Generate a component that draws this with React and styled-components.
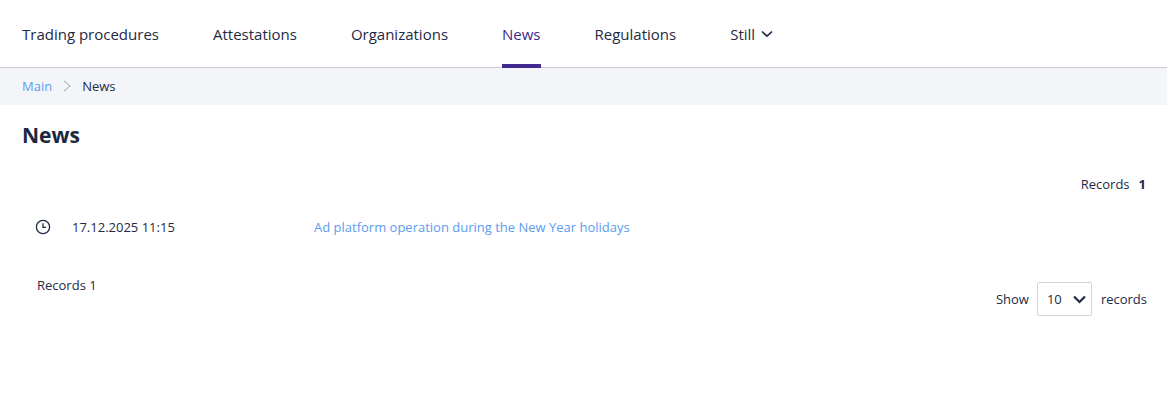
import React from 'react'
import styled, { createGlobalStyle } from 'styled-components'

const GlobalStyle = createGlobalStyle`
html, body {
    margin: 0;
    padding: 0;
    background: #fff;
    font-family: "Open Sans", "Liberation Sans", sans-serif;
    color: #1f2a44;
}
* { box-sizing: border-box; }
`

const navItems = ['Trading procedures', 'Attestations', 'Organizations', 'News', 'Regulations']

const App = () => (
    <>
        <GlobalStyle />
        <Nav>
            {navItems.map(item => (
                <NavItem key={item} $active={item === 'News'}>{item}</NavItem>
            ))}
            <NavItem>
                Still
                <svg width="12" height="8" viewBox="0 0 12 8" fill="none" stroke="#1f2a44" strokeWidth="1.7">
                    <path d="M1 1.5 L6 6.2 L11 1.5" />
                </svg>
            </NavItem>
        </Nav>
        <Breadcrumbs>
            <Crumb>Main</Crumb>
            <svg width="8" height="12" viewBox="0 0 8 12" fill="none" stroke="#9a9fae" strokeWidth="1">
                <path d="M1 1 L7 6 L1 11" />
            </svg>
            <CurrentCrumb>News</CurrentCrumb>
        </Breadcrumbs>
        <Title>News</Title>
        <TopCount>
            <span>Records</span>
            <strong>1</strong>
        </TopCount>
        <NewsRow>
            <ClockCell>
                <svg width="16" height="16" viewBox="0 0 16 16" fill="none" stroke="#1f2a44" strokeWidth="1.3">
                    <circle cx="8" cy="8" r="6.6" />
                    <path d="M8 4.2 V8.3 H11" />
                </svg>
            </ClockCell>
            <DateCell>17.12.2025 11:15</DateCell>
            <NewsLink>Ad platform operation during the New Year holidays</NewsLink>
        </NewsRow>
        <Footer>
            <BottomCount>Records 1</BottomCount>
            <PageSize>
                <span>Show</span>
                <Select>
                    <span>10</span>
                    <svg width="13" height="9" viewBox="0 0 13 9" fill="none" stroke="#1f2a44" strokeWidth="2.2">
                        <path d="M1 1.5 L6.5 7 L12 1.5" />
                    </svg>
                </Select>
                <span>records</span>
            </PageSize>
        </Footer>
    </>
)

const Nav = styled.nav`
height: 68px;
display: flex;
gap: 54px;
padding-left: 22px;
border-bottom: 1px solid #c9ccd4;
`
const NavItem = styled.div`
height: 68px;
display: flex;
align-items: center;
gap: 6px;
padding-top: 3px;
font-size: 15px;
color: ${p => (p.$active ? '#40298f' : '#1f2a44')};
border-bottom: 4px solid ${p => (p.$active ? '#422a92' : 'transparent')};
`
const Breadcrumbs = styled.div`
height: 37px;
display: flex;
align-items: center;
gap: 11px;
padding: 0 22px 1px;
background: #f4f5f9;
font-size: 13px;
`
const Crumb = styled.span`
color: #5c9cee;
`
const CurrentCrumb = styled.span`
color: #1f2a44;
`
const Title = styled.h1`
margin: 0;
padding: 16px 22px 0;
font-size: 21px;
line-height: 29px;
font-weight: 700;
color: #1a2840;
`
const TopCount = styled.div`
display: flex;
justify-content: flex-end;
gap: 9px;
padding: 25px 21px 0 0;
font-size: 13px;
line-height: 18px;
strong { font-weight: 700; }
`
const NewsRow = styled.div`
display: flex;
align-items: center;
height: 30px;
margin-top: 19px;
font-size: 13px;
`
const ClockCell = styled.div`
width: 72px;
padding-left: 35px;
display: flex;
`
const DateCell = styled.div`
width: 242px;
`
const NewsLink = styled.a`
color: #5c9cee;
`
const Footer = styled.div`
display: flex;
justify-content: space-between;
align-items: flex-start;
padding: 25px 20px 0 37px;
font-size: 13px;
`
const BottomCount = styled.div`
line-height: 18px;
margin-top: 9px;
`
const PageSize = styled.div`
display: flex;
align-items: center;
margin-top: 15px;
`
const Select = styled.div`
width: 55px;
height: 34px;
margin: 0 9px 0 8px;
display: flex;
align-items: center;
justify-content: space-between;
padding: 0 5px 0 9px;
border: 1px solid #ced4da;
border-radius: 2px;
background: #fff;
`

export default App
